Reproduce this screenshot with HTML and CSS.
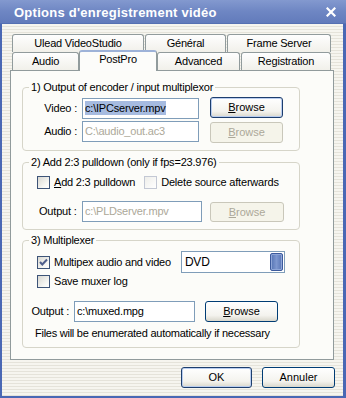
FILE: index.html
```html
<!DOCTYPE html>
<html lang="fr">
<head>
  <meta charset="UTF-8">
  <meta name="viewport" content="width=device-width, initial-scale=1.0">
  <title>Options d'enregistrement vidéo</title>
  <link rel="stylesheet" href="styles.css">
</head>
<body>
  <div class="window">
    <div class="titlebar">
      <span class="title">Options d'enregistrement vidéo</span>
      <svg class="close" width="10" height="10" viewBox="0 0 10 10">
        <path d="M1.5 1.5 L8.5 8.5 M8.5 1.5 L1.5 8.5" stroke="#fff" stroke-width="2.2" stroke-linecap="square"/>
      </svg>
    </div>

    <div class="client">
      <div class="tab-row back">
        <div class="tab t-ulead">Ulead VideoStudio</div>
        <div class="tab t-general">Général</div>
        <div class="tab t-frame">Frame Server</div>
      </div>
      <div class="tab-row front">
        <div class="tab t-audio">Audio</div>
        <div class="tab t-postpro active">PostPro</div>
        <div class="tab t-adv">Advanced</div>
        <div class="tab t-reg">Registration</div>
      </div>

      <div class="panel">
        <fieldset class="group g1">
          <legend>1) Output of encoder / input multiplexor</legend>
          <div class="file-grid">
            <span class="lbl">Video :</span>
            <div class="field"><span class="selected">c:\IPCserver.mpv</span></div>
            <div class="btn default b-video"><u>B</u>rowse</div>
            <span class="lbl">Audio :</span>
            <div class="field disabled">C:\audio_out.ac3</div>
            <div class="btn disabled b-audio"><u>B</u>rowse</div>
          </div>
        </fieldset>

        <fieldset class="group g2">
          <legend>2) Add 2:3 pulldown (only if fps=23.976)</legend>
          <div class="check-row">
            <span class="check"></span>
            <span class="check-label"><u>A</u>dd 2:3 pulldown</span>
            <span class="check plain"></span>
            <span class="check-label">Delete source afterwards</span>
          </div>
          <div class="out-grid">
            <span class="lbl">Output :</span>
            <div class="field disabled">c:\PLDserver.mpv</div>
            <div class="btn disabled"><u>B</u>rowse</div>
          </div>
        </fieldset>

        <fieldset class="group g3">
          <legend>3) Multiplexer</legend>
          <div class="mux-row">
            <span class="check checked">
              <svg width="11" height="11" viewBox="0 0 11 11">
                <path d="M2 5 L4.3 7.5 L9 2.5" fill="none" stroke="#4f5f8c" stroke-width="2"/>
              </svg>
            </span>
            <span class="check-label">Multipex audio and video</span>
            <div class="select">
              <span>DVD</span>
              <span class="drop"></span>
            </div>
          </div>
          <div class="log-row">
            <span class="check"></span>
            <span class="check-label">Save muxer log</span>
          </div>
          <div class="mux-grid">
            <span class="lbl">Output :</span>
            <div class="field">c:\muxed.mpg</div>
            <div class="btn"><u>B</u>rowse</div>
          </div>
          <div class="note">Files will be enumerated automatically if necessary</div>
        </fieldset>
      </div>

      <div class="buttons">
        <div class="btn default ok">OK</div>
        <div class="btn cancel">Annuler</div>
      </div>
    </div>
  </div>
</body>
</html>
```

FILE: styles.css
```css
body {
  margin: 0;
  font-family: "Liberation Sans", Arial, sans-serif;
  font-size: 11px;
  letter-spacing: -0.2px;
  color: #000;
}

.window {
  width: 346px;
  height: 398px;
}

.titlebar {
  height: 24px;
  box-sizing: border-box;
  display: flex;
  align-items: center;
  justify-content: space-between;
  padding: 0 10px 0 14px;
  background: linear-gradient(#8399cf, #6e86c3 50%, #627bbb);
  border-bottom: 1px solid #5570b2;
}

.title {
  color: #fff;
  font-size: 13px;
  font-weight: bold;
  letter-spacing: 0.25px;
  padding-top: 1px;
}

.close {
  display: block;
}

.client {
  height: 374px;
  box-sizing: border-box;
  padding: 10px 0 0 8px;
  border-left: 2px solid #4a68b4;
  border-right: 3px solid #4a68b4;
  border-bottom: 2px solid #4a68b4;
  background: repeating-linear-gradient(to bottom, #f6f5ef 0, #f6f5ef 2px, #e5e3da 2px, #e5e3da 3px);
}

/* tabs */
.tab-row {
  display: flex;
  margin-left: 2px;
  height: 18px;
}

.tab {
  box-sizing: border-box;
  height: 18px;
  margin-right: 1px;
  border: 1px solid #919b9c;
  border-bottom: none;
  border-radius: 3px 3px 0 0;
  background: linear-gradient(#fefefe, #f1f0ea);
  text-align: center;
  line-height: 17px;
}

.t-ulead { width: 132px; }
.t-general { width: 81px; }
.t-frame { width: 104px; }
.t-audio { width: 67px; margin-right: 0; }
.t-postpro { width: 78px; margin-right: 0; }
.t-adv { width: 83px; }
.t-reg { width: 90px; }

.tab.active {
  height: 21px;
  margin-top: -2px;
  position: relative;
  z-index: 1;
  background: #fcfcfa;
  border-top: 2px solid #9db2d8;
  line-height: 14px;
}

.panel {
  width: 324px;
  height: 290px;
  box-sizing: border-box;
  border: 1px solid #919b9c;
  background: #fcfcf9;
  padding: 0 0 0 11px;
  display: flex;
  flex-direction: column;
}

/* group boxes */
.group {
  width: 278px;
  box-sizing: border-box;
  margin: 0;
  padding: 0;
  min-width: 0;
  border: 1px solid #d6d5c9;
  border-radius: 4px;
}

legend {
  margin-left: 6px;
  padding: 0 2px;
  line-height: 13px;
}

.g1 { margin-top: 10px; padding: 4px 0 8px; }
.g2 { margin-top: 5px; padding: 7px 0 7px; }
.g3 { margin-top: 4px; padding: 4px 0 7px; }

.lbl {
  text-align: right;
  line-height: 21px;
  white-space: nowrap;
}

.field {
  box-sizing: border-box;
  height: 21px;
  border: 1px solid #7f9db9;
  background: #fff;
  padding: 0 2px;
  line-height: 19px;
  white-space: nowrap;
  overflow: hidden;
}

.field.disabled {
  color: #aca899;
}

.selected {
  background: #a6bbe0;
  padding: 1px 0;
}

.file-grid {
  display: grid;
  grid-template-columns: 59px 117px 84px;
  grid-auto-rows: 21px;
  row-gap: 2px;
}

.file-grid .lbl { padding-right: 5px; }
.file-grid .btn { margin-left: 11px; width: 73px; }
.b-video { margin-top: -1px; height: 22px; }
.b-audio { margin-top: 1px; height: 20px; }

/* buttons */
.btn {
  box-sizing: border-box;
  height: 21px;
  border: 1px solid #003c74;
  border-radius: 3px;
  background: linear-gradient(#ffffff, #f4f3ee 70%, #d9d7cc);
  text-align: center;
  line-height: 19px;
  letter-spacing: 0;
}

.btn.default {
  border-color: #1d3e6e;
  box-shadow: inset 0 0 0 1px #b9cdef;
}

.btn.disabled {
  border-color: #c9c7ba;
  background: #f5f4ea;
  color: #aca899;
  box-shadow: none;
}

/* checkboxes */
.check {
  box-sizing: border-box;
  width: 13px;
  height: 13px;
  border: 1px solid #3d5478;
  background: linear-gradient(135deg, #d8d8d2, #f7f7f4 70%, #ffffff);
  display: flex;
  align-items: center;
  justify-content: center;
  flex-shrink: 0;
}

.check.plain {
  border-color: #c3c8d4;
  background: linear-gradient(135deg, #eeeeea, #ffffff);
}

.check-label {
  margin-left: 4px;
  line-height: 13px;
}

.check-row {
  display: flex;
  align-items: center;
  padding-left: 14px;
  height: 13px;
}

.check-row .plain {
  margin-left: 9px;
}

.out-grid {
  display: grid;
  grid-template-columns: 59px 120px 82px;
  margin-top: 12px;
}

.out-grid .lbl { text-align: left; padding-left: 16px; }
.out-grid .btn { margin-left: 8px; margin-top: 1px; height: 20px; }

.mux-row {
  display: flex;
  align-items: center;
  padding-left: 14px;
  height: 22px;
}

.select {
  box-sizing: border-box;
  width: 104px;
  height: 22px;
  margin-left: 10px;
  border: 1px solid #7f9db9;
  background: #fff;
  display: flex;
  align-items: center;
  justify-content: space-between;
  padding: 0 1px 0 3px;
  font-size: 12px;
}

.drop {
  box-sizing: border-box;
  width: 13px;
  height: 18px;
  border: 1px solid #3c5a9c;
  border-radius: 2px;
  background: linear-gradient(90deg, #5574b4, #7d97cf 50%, #5875b5);
  box-shadow: inset 0 0 0 1px #8ea6d8;
}

.log-row {
  display: flex;
  align-items: center;
  padding-left: 14px;
  margin-top: 2px;
  height: 13px;
}

.mux-grid {
  display: grid;
  grid-template-columns: 51px 121px 83px;
  margin-top: 13px;
}

.mux-grid .lbl { padding-right: 5px; }
.mux-grid .btn { margin-left: 10px; }

.note {
  margin-top: 5px;
  padding-left: 12px;
  line-height: 13px;
  letter-spacing: -0.25px;
}

.buttons {
  display: flex;
  justify-content: flex-end;
  gap: 10px;
  margin-top: 7px;
  padding-right: 8px;
}

.ok { width: 71px; }
.cancel { width: 73px; }
```
